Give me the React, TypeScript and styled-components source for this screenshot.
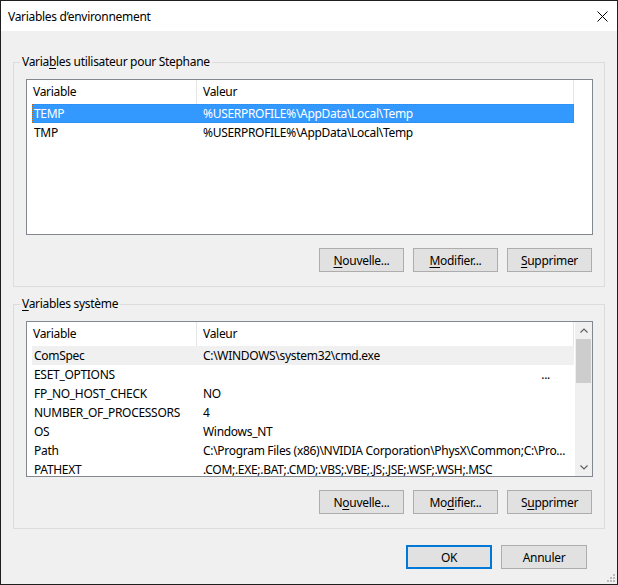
import React from 'react';
import styled, { createGlobalStyle } from 'styled-components';

const GlobalStyle = createGlobalStyle`
  html, body {
    margin: 0;
    padding: 0;
    background: #ffffff;
  }
  * {
    box-sizing: border-box;
  }
`;

const Window = styled.div`
  position: relative;
  display: flex;
  flex-direction: column;
  width: 618px;
  height: 585px;
  border: 1px solid #1f1f1f;
  font-family: 'Noto Sans', sans-serif;
  font-size: 12px;
  letter-spacing: -0.3px;
  color: #000000;
  background: #f0f0f0;
`;

const TitleBar = styled.div`
  display: flex;
  align-items: center;
  justify-content: space-between;
  height: 30px;
  padding-left: 7px;
  background: #ffffff;
`;

const CloseButton = styled.div`
  display: flex;
  align-items: center;
  justify-content: center;
  width: 30px;
  height: 30px;
`;

const Body = styled.div`
  display: flex;
  flex-direction: column;
  flex: 1;
  padding: 0 12px;
`;

const Group = styled.fieldset<{ $top: number }>`
  margin: ${(p) => p.$top}px 0 0;
  padding: 9px 11px 14px 12px;
  border: 1px solid #dcdcdc;
  min-width: 0;
`;

const Legend = styled.legend`
  margin-left: -6px;
  padding: 0 2px;
  line-height: 16px;
`;

const Key = styled.u`
  text-decoration: underline;
  text-underline-offset: 2px;
`;

const List = styled.div`
  display: flex;
  height: 156px;
  border: 1px solid #828790;
  background: #ffffff;
  overflow: hidden;
`;

const ListContent = styled.div`
  flex: 1;
  min-width: 0;
  overflow: hidden;
`;

const Header = styled.div`
  display: flex;
  height: 24px;
`;

const HeaderCell = styled.div<{ $width: number }>`
  width: ${(p) => p.$width}px;
  padding-left: 6px;
  line-height: 24px;
  border-right: 1px solid #e5e5e5;
`;

const Row = styled.div<{ $state?: 'selected' | 'inactive' }>`
  display: flex;
  width: 542px;
  height: 19px;
  margin-left: 5px;
  line-height: 19px;
  white-space: nowrap;
  background: ${(p) =>
    p.$state === 'selected' ? '#3399ff' : p.$state === 'inactive' ? '#f0f0f0' : 'transparent'};
  color: ${(p) => (p.$state === 'selected' ? '#ffffff' : '#000000')};
  outline: ${(p) => (p.$state === 'selected' ? '1px dotted #cc6600' : 'none')};
  outline-offset: -1px;
`;

const NameCell = styled.div`
  width: 165px;
  padding-left: 2px;
  overflow: hidden;
`;

const ValueCell = styled.div<{ $trailing?: boolean }>`
  flex: 1;
  min-width: 0;
  padding-left: 6px;
  padding-right: ${(p) => (p.$trailing ? 24 : 1)}px;
  text-align: ${(p) => (p.$trailing ? 'right' : 'left')};
  overflow: hidden;
  text-overflow: ellipsis;
`;

const ScrollBar = styled.div`
  display: flex;
  flex-direction: column;
  width: 17px;
  background: #f0f0f0;
`;

const ScrollArrow = styled.div`
  display: flex;
  align-items: center;
  justify-content: center;
  height: 17px;
`;

const ScrollTrack = styled.div`
  flex: 1;
  padding: 0 1px;
`;

const ScrollThumb = styled.div`
  height: 44px;
  background: #cdcdcd;
`;

const ButtonRow = styled.div<{ $top: number }>`
  display: flex;
  justify-content: flex-end;
  gap: 9px;
  margin-top: ${(p) => p.$top}px;
  padding-right: 1px;
`;

const Footer = styled(ButtonRow)`
  padding-right: 18px;

  & > button {
    width: 86px;
  }
`;

const Button = styled.button<{ $default?: boolean }>`
  width: 85px;
  height: 24px;
  padding: 0;
  font-family: inherit;
  font-size: 12px;
  letter-spacing: inherit;
  color: #000000;
  background: #e1e1e1;
  border: ${(p) => (p.$default ? '2px solid #0078d7' : '1px solid #adadad')};
`;

const Grip = styled.svg`
  position: absolute;
  right: 1px;
  bottom: 1px;
`;

type Variable = { name: string; value: string; trailing?: boolean };

const userVars: Variable[] = [
  { name: 'TEMP', value: '%USERPROFILE%\\AppData\\Local\\Temp' },
  { name: 'TMP', value: '%USERPROFILE%\\AppData\\Local\\Temp' },
];

const systemVars: Variable[] = [
  { name: 'ComSpec', value: 'C:\\WINDOWS\\system32\\cmd.exe' },
  { name: 'ESET_OPTIONS', value: '...', trailing: true },
  { name: 'FP_NO_HOST_CHECK', value: 'NO' },
  { name: 'NUMBER_OF_PROCESSORS', value: '4' },
  { name: 'OS', value: 'Windows_NT' },
  { name: 'Path', value: 'C:\\Program Files (x86)\\NVIDIA Corporation\\PhysX\\Common;C:\\Pro...' },
  { name: 'PATHEXT', value: '.COM;.EXE;.BAT;.CMD;.VBS;.VBE;.JS;.JSE;.WSF;.WSH;.MSC' },
];

const Chevron = ({ up }: { up?: boolean }) => (
  <svg width="8" height="5" viewBox="0 0 8 5">
    <path
      d={up ? 'M0.5 4.5 L4 1 L7.5 4.5' : 'M0.5 0.5 L4 4 L7.5 0.5'}
      fill="none"
      stroke="#606060"
      strokeWidth="1.2"
    />
  </svg>
);

const VariableList = ({
  rows,
  active,
  selected,
  scroll,
}: {
  rows: Variable[];
  active?: number;
  selected?: number;
  scroll?: boolean;
}) => (
  <List>
    <ListContent>
      <Header>
        <HeaderCell $width={170}>Variable</HeaderCell>
        <HeaderCell $width={377}>Valeur</HeaderCell>
      </Header>
      {rows.map((r, i) => (
        <Row
          key={r.name}
          $state={i === active ? 'selected' : i === selected ? 'inactive' : undefined}
        >
          <NameCell>{r.name}</NameCell>
          <ValueCell $trailing={r.trailing}>{r.value}</ValueCell>
        </Row>
      ))}
    </ListContent>
    {scroll && (
      <ScrollBar>
        <ScrollArrow>
          <Chevron up />
        </ScrollArrow>
        <ScrollTrack>
          <ScrollThumb />
        </ScrollTrack>
        <ScrollArrow>
          <Chevron />
        </ScrollArrow>
      </ScrollBar>
    )}
  </List>
);

export default function App() {
  return (
    <>
      <GlobalStyle />
      <Window>
        <TitleBar>
          <span>Variables d’environnement</span>
          <CloseButton>
            <svg width="11" height="11" viewBox="0 0 11 11">
              <path d="M0.5 0.5 L10.5 10.5 M10.5 0.5 L0.5 10.5" stroke="#000" strokeWidth="1" />
            </svg>
          </CloseButton>
        </TitleBar>
        <Body>
          <Group $top={23}>
            <Legend>
              Varia<Key>b</Key>les utilisateur pour Stephane
            </Legend>
            <VariableList rows={userVars} active={0} />
            <ButtonRow $top={13}>
              <Button>
                <Key>N</Key>ouvelle...
              </Button>
              <Button>
                <Key>M</Key>odifier...
              </Button>
              <Button>
                <Key>S</Key>upprimer
              </Button>
            </ButtonRow>
          </Group>
          <Group $top={9}>
            <Legend>
              <Key>V</Key>ariables système
            </Legend>
            <VariableList rows={systemVars} selected={0} scroll />
            <ButtonRow $top={13}>
              <Button>
                N<Key>o</Key>uvelle...
              </Button>
              <Button>
                Mo<Key>d</Key>ifier...
              </Button>
              <Button>
                S<Key>u</Key>pprimer
              </Button>
            </ButtonRow>
          </Group>
          <Footer $top={16}>
            <Button $default>OK</Button>
            <Button>Annuler</Button>
          </Footer>
        </Body>
        <Grip width="10" height="10" viewBox="0 0 10 10">
          {[
            [7, 1],
            [7, 4],
            [4, 4],
            [7, 7],
            [4, 7],
            [1, 7],
          ].map(([x, y]) => (
            <rect key={`${x}-${y}`} x={x} y={y} width="2" height="2" fill="#bcbcbc" />
          ))}
        </Grip>
      </Window>
    </>
  );
}
